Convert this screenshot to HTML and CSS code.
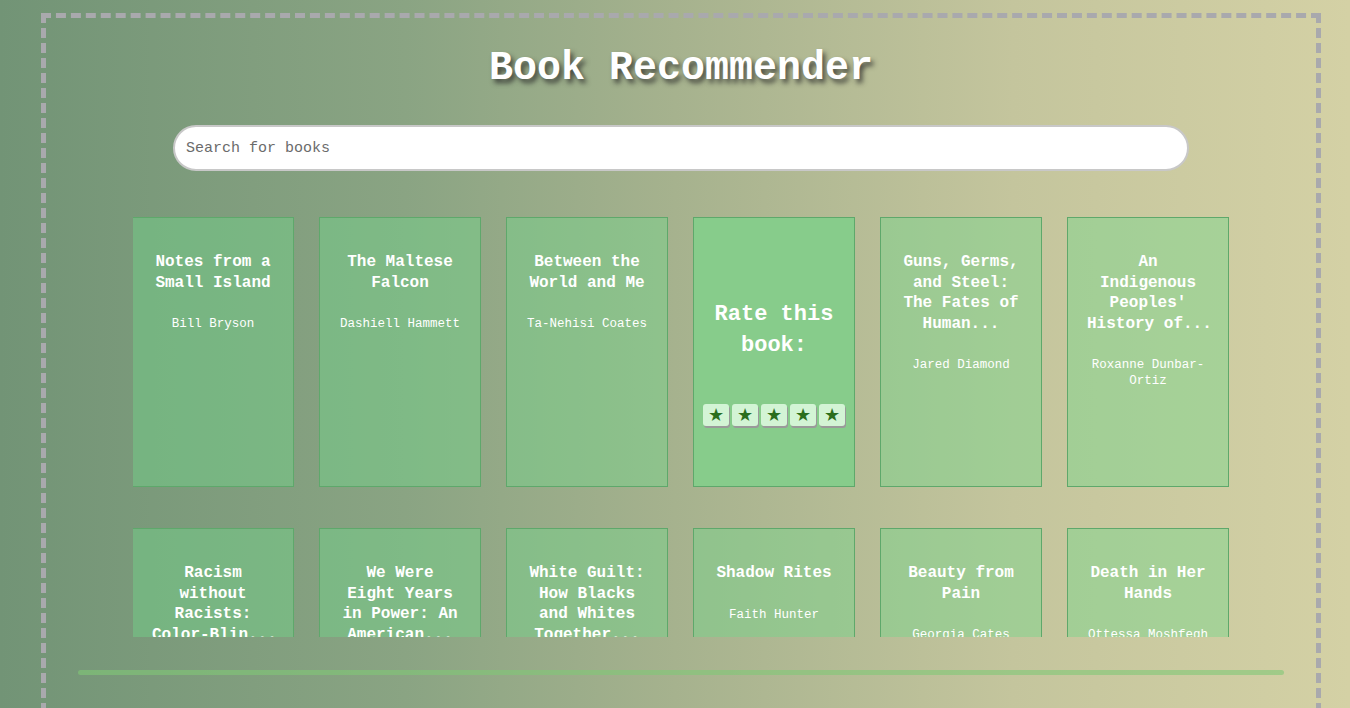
FILE: index.html
```html
<!DOCTYPE html>
<html lang="en">
<head>
<meta charset="utf-8">
<title>Book Recommender</title>
<link rel="stylesheet" href="styles.css">
</head>
<body>
<div class="frame">
  <h1 class="title">Book Recommender</h1>
  <div class="search-wrap">
    <input class="search" type="text" placeholder="Search for books">
  </div>
  <div class="shelf">
    <div class="grid">
      <div class="card"><div class="card-title">Notes from a Small Island</div><div class="card-author">Bill Bryson</div></div>
      <div class="card"><div class="card-title">The Maltese Falcon</div><div class="card-author">Dashiell Hammett</div></div>
      <div class="card"><div class="card-title">Between the World and Me</div><div class="card-author">Ta-Nehisi Coates</div></div>
      <div class="card card-rate">
        <div class="rate-text">Rate this book:</div>
        <div class="stars">
          <div class="star">★</div><div class="star">★</div><div class="star">★</div><div class="star">★</div><div class="star">★</div>
        </div>
      </div>
      <div class="card"><div class="card-title">Guns, Germs, and Steel: The Fates of Human...</div><div class="card-author">Jared Diamond</div></div>
      <div class="card"><div class="card-title">An Indigenous Peoples' <span class="nowrap">History of...</span></div><div class="card-author">Roxanne Dunbar-Ortiz</div></div>

      <div class="card"><div class="card-title">Racism without Racists: <span class="nowrap">Color-Blin...</span></div><div class="card-author">Eduardo Bonilla-Silva</div></div>
      <div class="card"><div class="card-title">We Were Eight Years in Power: An American...</div><div class="card-author">Ta-Nehisi Coates</div></div>
      <div class="card"><div class="card-title">White Guilt: How Blacks and Whites Together...</div><div class="card-author">Shelby Steele</div></div>
      <div class="card"><div class="card-title">Shadow Rites</div><div class="card-author">Faith Hunter</div></div>
      <div class="card"><div class="card-title">Beauty from Pain</div><div class="card-author">Georgia Cates</div></div>
      <div class="card"><div class="card-title">Death in Her Hands</div><div class="card-author">Ottessa Moshfegh</div></div>
    </div>
  </div>
  <div class="bar"></div>
</div>
</body>
</html>
```

FILE: styles.css
```css
html, body {
  margin: 0;
  padding: 0;
  height: 100%;
  overflow: hidden;
}
body {
  background: linear-gradient(90deg, #729476 0%, #8aa483 30%, #a6b28e 50%, #c4c59d 75%, #d4d1a5 100%);
  font-family: "Liberation Mono", "Courier New", monospace;
  color: #fff;
}
.frame {
  box-sizing: border-box;
  width: 1280px;
  height: 760px;
  margin: 13px 0 0 41px;
  border: 5px dashed #a9a9ad;
  display: flex;
  flex-direction: column;
  align-items: center;
}
.title {
  margin: 27px 0 0;
  font-size: 40px;
  line-height: 48px;
  font-weight: bold;
  color: #fff;
  text-shadow: 3px 4px 5px rgba(40, 40, 40, 0.75);
}
.search-wrap {
  width: 80%;
  margin-top: 32px;
}
.search {
  box-sizing: border-box;
  width: 100%;
  height: 46px;
  border: 2px solid #c8c8c8;
  border-radius: 23px;
  background: #fff;
  padding: 0 11px;
  font-family: "Liberation Mono", "Courier New", monospace;
  font-size: 15px;
  color: #333;
  outline: none;
}
.search::placeholder {
  color: #6b6b6b;
}
.shelf {
  margin-top: 46px;
  height: 420px;
  overflow: hidden;
}
.grid {
  display: grid;
  grid-template-columns: repeat(6, 162px);
  column-gap: 25px;
  row-gap: 41px;
  margin-left: -1px;
}
.card {
  box-sizing: border-box;
  height: 270px;
  border: 1px solid #5ea86b;
  background: rgba(112, 218, 138, 0.42);
  padding: 34px 19px 0;
  text-align: center;
}
.card-title {
  font-size: 16px;
  line-height: 20.5px;
  font-weight: bold;
}
.card-author {
  margin-top: 23px;
  font-size: 12.5px;
  line-height: 16px;
}
.nowrap {
  white-space: nowrap;
}
.card-rate {
  background: #87cc8b;
  padding: 81px 0 0;
}
.rate-text {
  font-size: 22px;
  line-height: 31px;
  font-weight: bold;
}
.stars {
  margin-top: 43px;
  display: flex;
  justify-content: center;
  gap: 3px;
}
.star {
  flex: 0 0 26px;
  width: 26px;
  height: 22px;
  border-radius: 3px;
  background: #d3f4d5;
  box-shadow: 1px 2px 0 #9a9a9a;
  color: #2b6e1c;
  font-family: "DejaVu Sans", sans-serif;
  font-size: 18px;
  line-height: 22px;
  text-align: center;
}
.bar {
  width: 95%;
  height: 5px;
  margin-top: 33px;
  border-radius: 3px;
  background: rgba(128, 200, 118, 0.6);
}
```
